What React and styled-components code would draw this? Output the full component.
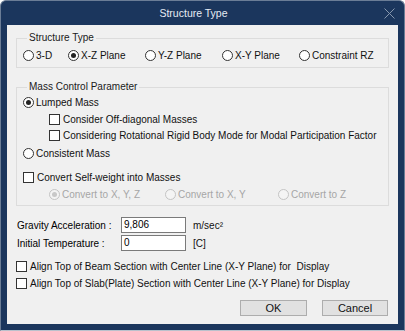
import styled, { createGlobalStyle } from "styled-components";

const GlobalStyle = createGlobalStyle`
  html, body {
    margin: 0;
    padding: 0;
    background: #ffffff;
  }
  body {
    font-family: "Liberation Sans", Arial, sans-serif;
  }
`;

const Window = styled.div`
  width: 405px;
  height: 331px;
  box-sizing: border-box;
  background: #1b365d;
  border: 1px solid #6b7d96;
  border-bottom-color: #b9c1cc;
  border-radius: 6px 6px 0 0;
  display: flex;
  flex-direction: column;
  overflow: hidden;
`;

const TitleBar = styled.div`
  height: 24px;
  flex: none;
  display: flex;
  align-items: center;
  justify-content: center;
  position: relative;
  padding-right: 18px;
  color: #e6ecf4;
  font-size: 10.5px;
`;

const Close = styled.div`
  position: absolute;
  right: 9px;
  top: 7px;
  width: 11px;
  height: 11px;
  display: flex;
`;

const Body = styled.div`
  flex: 1;
  margin: 0 6px 6px;
  background: #f0f0f0;
  padding: 6px 9px 0 9px;
  display: flex;
  flex-direction: column;
  font-size: 10px;
  color: #000;
`;

const Group = styled.fieldset`
  margin: 0;
  padding: ${(p) => p.$pad || "2px 0 4px 6px"};
  border: 1px solid #dcdcdc;
  border-radius: 0;
  margin-top: ${(p) => p.$top || "0"};
`;

const Legend = styled.legend`
  padding: 0 2px;
  margin-left: 4px;
  line-height: 14px;
  font-size: 10px;
  color: #1a1a1a;
`;

const RadioRow = styled.div`
  display: grid;
  grid-template-columns: ${(p) => p.$cols};
  height: 16px;
  align-items: center;
  margin-left: ${(p) => p.$indent || "0"};
  margin-top: ${(p) => p.$mt || "0"};
`;

const Option = styled.label`
  display: flex;
  align-items: center;
  gap: 2px;
  height: 16px;
  white-space: nowrap;
  color: ${(p) => (p.$disabled ? "#a6a6a6" : "#111")};
  margin-left: ${(p) => p.$indent || "0"};
  margin-top: ${(p) => p.$mt || "0"};
`;

const RadioDot = styled.span`
  width: 11px;
  height: 11px;
  box-sizing: border-box;
  border-radius: 50%;
  border: 1px solid ${(p) => (p.$disabled ? "#c4c4c4" : "#333")};
  background: ${(p) => (p.$disabled ? "#f4f4f4" : "#fff")};
  display: flex;
  align-items: center;
  justify-content: center;
  flex: none;

  &::after {
    content: "";
    width: 5px;
    height: 5px;
    border-radius: 50%;
    background: ${(p) => (p.$disabled ? "#c8c8c8" : "#222")};
    display: ${(p) => (p.$on ? "block" : "none")};
  }
`;

const CheckBox = styled.span`
  width: 11px;
  height: 11px;
  box-sizing: border-box;
  border: 1px solid #333;
  background: #fff;
  flex: none;
  margin-right: 1px;
`;

const FieldGrid = styled.div`
  display: grid;
  grid-template-columns: 104px 72px auto;
  grid-auto-rows: 16px;
  row-gap: 2px;
  align-items: center;
  margin-top: 11px;
  padding-left: 1px;
`;

const Input = styled.div`
  width: 65px;
  height: 16px;
  box-sizing: border-box;
  border: 1px solid #7a7a7a;
  background: #fff;
  padding-left: 2px;
  line-height: 14px;
`;

const Unit = styled.span`
  color: #111;
`;

const Checks = styled.div`
  display: flex;
  flex-direction: column;
  margin-top: 7px;
  gap: 1px;
`;

const Buttons = styled.div`
  display: flex;
  justify-content: flex-end;
  gap: 15px;
  margin-top: 9px;
  padding-right: 1px;
`;

const Button = styled.button`
  width: ${(p) => p.$w || "67px"};
  height: 16px;
  box-sizing: border-box;
  border: 1px solid #adadad;
  background: #e1e1e1;
  font-family: inherit;
  font-size: 11px;
  line-height: 14px;
  padding: 0;
  color: #111;
`;

const Radio = ({ on, disabled, children, indent, mt }) => (
  <Option $disabled={disabled} $indent={indent} $mt={mt}>
    <RadioDot $on={on} $disabled={disabled} />
    {children}
  </Option>
);

const Check = ({ children, indent, mt }) => (
  <Option $indent={indent} $mt={mt}>
    <CheckBox />
    {children}
  </Option>
);

export default function App() {
  return (
    <>
      <GlobalStyle />
      <Window>
        <TitleBar>
          Structure Type
          <Close>
            <svg width="11" height="11" viewBox="0 0 11 11">
              <path d="M0.5 0.5 L10.5 10.5 M10.5 0.5 L0.5 10.5" stroke="#8797ad" strokeWidth="1" />
            </svg>
          </Close>
        </TitleBar>
        <Body>
          <Group>
            <Legend>Structure Type</Legend>
            <RadioRow $cols="45px 77px 77px 77px auto">
              <Radio>3-D</Radio>
              <Radio on>X-Z Plane</Radio>
              <Radio>Y-Z Plane</Radio>
              <Radio>X-Y Plane</Radio>
              <Radio>Constraint RZ</Radio>
            </RadioRow>
          </Group>

          <Group $top="12px" $pad="0 0 3px 6px">
            <Legend>Mass Control Parameter</Legend>
            <Radio on>Lumped Mass</Radio>
            <Check indent="26px" mt="1px">Consider Off-diagonal Masses</Check>
            <Check indent="26px">Considering Rotational Rigid Body Mode for Modal Participation Factor</Check>
            <Radio mt="2px">Consistent Mass</Radio>
            <Check mt="8px">Convert Self-weight into Masses</Check>
            <RadioRow $cols="116px 113px auto" $indent="26px" $mt="1px">
              <Radio on disabled>Convert to X, Y, Z</Radio>
              <Radio disabled>Convert to X, Y</Radio>
              <Radio disabled>Convert to Z</Radio>
            </RadioRow>
          </Group>

          <FieldGrid>
            <span>Gravity Acceleration :</span>
            <Input>9,806</Input>
            <Unit>m/sec²</Unit>
            <span>Initial Temperature :</span>
            <Input>0</Input>
            <Unit>[C]</Unit>
          </FieldGrid>

          <Checks>
            <Check>Align Top of Beam Section with Center Line (X-Y Plane) for&nbsp; Display</Check>
            <Check>Align Top of Slab(Plate) Section with Center Line (X-Y Plane) for Display</Check>
          </Checks>

          <Buttons>
            <Button $w="67px">OK</Button>
            <Button $w="66px">Cancel</Button>
          </Buttons>
        </Body>
      </Window>
    </>
  );
}
